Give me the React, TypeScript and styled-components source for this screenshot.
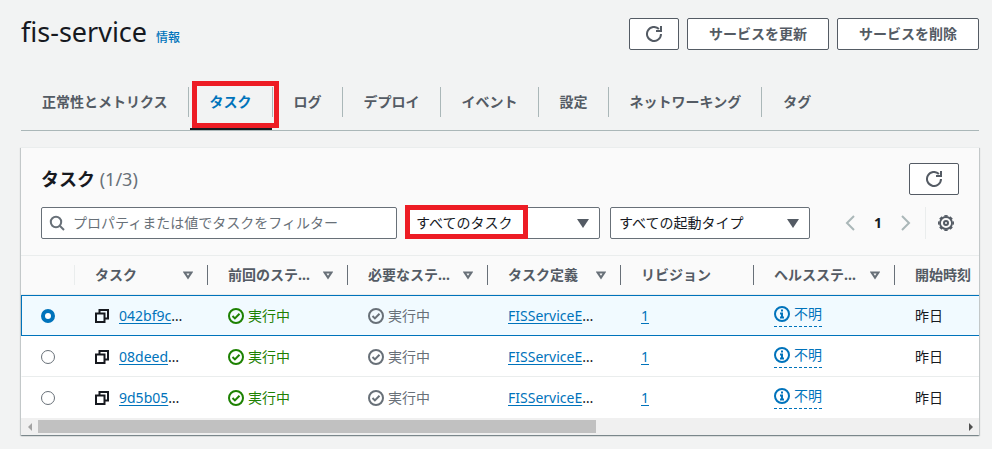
import React, { useState } from "react";
import styled, { createGlobalStyle, css } from "styled-components";

const GlobalStyle = createGlobalStyle`
  *, *::before, *::after { box-sizing: border-box; }
  body {
    margin: 0;
    background: #f2f3f3;
    color: #16191f;
    font: 14px/22px "Noto Sans", "Noto Sans CJK JP", sans-serif;
  }
  button, input, select { font: inherit; margin: 0; }
`;

const Page = styled.main`
  padding: 14px 13px 14px 21px;
`;

const PageHeader = styled.header`
  display: flex;
  justify-content: space-between;
  align-items: flex-start;
`;

const Heading = styled.div`
  display: flex;
  align-items: baseline;
  gap: 9px;
`;

const ServiceName = styled.h1`
  margin: 0;
  font-size: 27px;
  line-height: 36px;
  font-weight: 400;
`;

const InfoLink = styled.a`
  color: #0073bb;
  font-size: 12px;
  font-weight: 500;
  text-decoration: none;
`;

const Actions = styled.div`
  display: flex;
  gap: 8px;
  padding-top: 4px;
`;

const Button = styled.button<{ $icon?: boolean }>`
  display: flex;
  align-items: center;
  justify-content: center;
  height: 32px;
  padding: 0 ${(p) => (p.$icon ? 16 : 21)}px;
  border: 1px solid #545b64;
  border-radius: 2px;
  background: #fff;
  color: #545b64;
  font-weight: 700;
  white-space: nowrap;
  cursor: pointer;
`;

const Tabs = styled.nav`
  display: flex;
  margin-top: 37px;
  padding-bottom: 13px;
  border-bottom: 1px solid #aab7b8;
`;

const Tab = styled.button<{ $active?: boolean }>`
  position: relative;
  height: 30px;
  padding: 0 20px 0 21px;
  border: 0;
  border-right: 1px solid #aab7b8;
  background: none;
  color: ${(p) => (p.$active ? "#0073bb" : "#545b64")};
  font-weight: 700;
  white-space: nowrap;
  cursor: pointer;
  &:last-child { border-right: 0; }
  ${(p) =>
    p.$active &&
    css`
      &::after {
        content: "";
        position: absolute;
        left: 1px;
        right: 0;
        bottom: -13px;
        height: 2px;
        background: #16191f;
      }
    `}
`;

const TabMarker = styled.span`
  position: absolute;
  z-index: 1;
  inset: -6px -7px -11px 3px;
  border: 5px solid #ed1c24;
  pointer-events: none;
`;

const Panel = styled.section`
  margin-top: 16px;
  border-top: 1px solid #eaeded;
  background: #fff;
  box-shadow: 0 1px 1px 0 rgba(0, 28, 36, 0.3), 1px 1px 1px 0 rgba(0, 28, 36, 0.15),
    -1px 1px 1px 0 rgba(0, 28, 36, 0.15);
`;

const PanelHeader = styled.div`
  padding: 15px 20px 16px;
  border-bottom: 1px solid #eaeded;
  background: #fafafa;
`;

const TitleRow = styled.div`
  display: flex;
  justify-content: space-between;
  align-items: center;
`;

const PanelTitle = styled.h2`
  margin: 0;
  font-size: 18px;
  line-height: 28px;
  font-weight: 700;
`;

const Counter = styled.span`
  color: #687078;
  font-weight: 400;
`;

const Filters = styled.div`
  display: flex;
  align-items: center;
  margin-top: 12px;
`;

const SearchBox = styled.label`
  display: flex;
  align-items: center;
  flex: 1;
  min-width: 0;
  height: 32px;
  gap: 8px;
  padding: 0 7px;
  border: 1px solid #687078;
  border-radius: 2px;
  background: #fff;
  color: #687078;
`;

const SearchInput = styled.input`
  flex: 1;
  min-width: 0;
  padding: 0;
  border: 0;
  outline: 0;
  background: none;
  &::placeholder { color: #687078; opacity: 1; }
`;

const SelectBox = styled.div<{ $width: number; $gap: number }>`
  position: relative;
  flex: 0 0 ${(p) => p.$width}px;
  margin-left: ${(p) => p.$gap}px;
`;

const Select = styled.select<{ $inset: number }>`
  display: block;
  appearance: none;
  width: 100%;
  height: 32px;
  padding: 0 32px 0 ${(p) => p.$inset}px;
  border: 1px solid #687078;
  border-radius: 2px;
  background: #fff;
  color: #16191f;
`;

const SelectArrow = styled.svg`
  position: absolute;
  right: 11px;
  top: 12px;
  pointer-events: none;
`;

const SelectMarker = styled.span`
  position: absolute;
  inset: -2px 72px 0 0;
  border: 5px solid #ed1c24;
  pointer-events: none;
`;

const Pager = styled.div`
  display: flex;
  align-items: center;
  margin-left: 29px;
`;

const PageButton = styled.button<{ $current?: boolean }>`
  display: flex;
  align-items: center;
  justify-content: center;
  width: ${(p) => (p.$current ? 34 : 22)}px;
  height: 32px;
  padding: 0;
  border: 0;
  background: none;
  color: ${(p) => (p.$current ? "#16191f" : "#aab7b8")};
  font-weight: 700;
`;

const Preferences = styled.button`
  display: flex;
  align-items: center;
  height: 32px;
  margin-left: 8px;
  padding: 0 5px 0 12px;
  border: 0;
  border-left: 1px solid #eaeded;
  background: none;
  color: #545b64;
`;

const TableClip = styled.div`
  overflow: hidden;
`;

const Table = styled.table`
  width: 100%;
  table-layout: fixed;
  border-collapse: separate;
  border-spacing: 0;
`;

const Col = styled.col<{ $width?: number }>`
  width: ${(p) => (p.$width ? `${p.$width}px` : "auto")};
`;

const HeaderCell = styled.th`
  padding: 9px 0;
  border-bottom: 1px solid #eaeded;
  background: #fafafa;
  color: #545b64;
  font-weight: 700;
  line-height: 20px;
  text-align: left;
  white-space: nowrap;
`;

const HeaderContent = styled.div<{ $divider?: "light" | "dark" }>`
  display: flex;
  align-items: center;
  justify-content: space-between;
  height: 20px;
  padding: 0 14px 0 20px;
  border-right: ${(p) =>
    p.$divider ? `1px solid ${p.$divider === "light" ? "#eaeded" : "#687078"}` : "0"};
`;

const Row = styled.tr<{ $selected?: boolean }>`
  > td {
    border-top: 1px solid ${(p) => (p.$selected ? "#0073bb" : "transparent")};
    border-bottom: 1px solid ${(p) => (p.$selected ? "#0073bb" : "#eaeded")};
    background: ${(p) => (p.$selected ? "#f1faff" : "#fff")};
  }
  > td:first-child {
    border-left: 1px solid ${(p) => (p.$selected ? "#0073bb" : "transparent")};
  }
  &:last-child > td { border-bottom-color: transparent; }
`;

const Cell = styled.td`
  height: 41px;
  padding: 0 0 0 20px;
  white-space: nowrap;
`;

const ChoiceCell = styled(Cell)`
  padding: 0 0 0 19px;
`;

const Radio = styled.input`
  display: block;
  appearance: none;
  width: 14px;
  height: 14px;
  border: 1px solid #687078;
  border-radius: 50%;
  background: #fff;
  &:checked { border: 4px solid #0073bb; }
`;

const Inline = styled.div<{ $tone?: "success" | "muted"; $gap?: number }>`
  display: flex;
  align-items: center;
  gap: ${(p) => p.$gap ?? 4}px;
  color: ${(p) =>
    p.$tone === "success" ? "#1d8102" : p.$tone === "muted" ? "#687078" : "#16191f"};
`;

const CopyButton = styled.button`
  display: flex;
  padding: 0;
  border: 0;
  background: none;
  color: #16191f;
`;

const Link = styled.a`
  color: #0073bb;
  text-decoration: underline;
  text-underline-offset: 2px;
`;

const Health = styled.button`
  display: inline-flex;
  align-items: center;
  gap: 4px;
  height: 23px;
  padding: 0 0 2px;
  border: 0;
  border-bottom: 1px dashed #0073bb;
  background: none;
  color: #0073bb;
  vertical-align: middle;
`;

const ScrollTrack = styled.div`
  display: flex;
  align-items: center;
  height: 17px;
  background: #f0f0f0;
`;

const ScrollStep = styled.button`
  display: flex;
  align-items: center;
  justify-content: center;
  width: 17px;
  height: 17px;
  padding: 0;
  border: 0;
  background: none;
`;

const ScrollLane = styled.div`
  flex: 1;
`;

const ScrollThumb = styled.div`
  width: 60.4%;
  height: 13px;
  background: #c1c1c1;
`;

const RefreshIcon = () => (
  <svg width="16" height="16" viewBox="0 0 16 16" fill="none" stroke="currentColor" strokeWidth="2">
    <path d="M15 8a7 7 0 1 1-2.1-5" />
    <path d="M10 5h5V0" />
  </svg>
);

const SearchIcon = () => (
  <svg width="16" height="16" viewBox="0 0 16 16" fill="none" stroke="currentColor" strokeWidth="2">
    <circle cx="7" cy="7" r="5.2" />
    <path d="m11 11 4 4" />
  </svg>
);

const SortIcon = () => (
  <svg width="10" height="9" viewBox="0 0 10 9" fill="none" stroke="#687078" strokeWidth="2">
    <path d="M1.6 1.5h6.8L5 6.6z" />
  </svg>
);

const Chevron = ({ d }: { d: string }) => (
  <svg width="10" height="16" viewBox="0 0 10 16" fill="none" stroke="currentColor" strokeWidth="2">
    <path d={d} />
  </svg>
);

const GearIcon = () => (
  <svg width="16" height="16" viewBox="0 0 16 16" fill="none" stroke="currentColor">
    <circle cx="8" cy="8" r="6" strokeWidth="1.8" />
    <circle cx="8" cy="8" r="7.2" strokeWidth="1.6" pathLength="16" strokeDasharray="1.2 0.8" strokeDashoffset="0.6" />
    <circle cx="8" cy="8" r="2" strokeWidth="2" />
  </svg>
);

const CopyIcon = () => (
  <svg width="14" height="14" viewBox="0 0 14 14" fill="none" stroke="currentColor" strokeWidth="2">
    <path d="M4.5 4.500V1H13v8.500H9.500" />
    <path d="M1 4.500h8.500V13H1z" />
  </svg>
);

const CheckIcon = () => (
  <svg width="16" height="16" viewBox="0 0 16 16" fill="none" stroke="currentColor" strokeWidth="2">
    <circle cx="8" cy="8" r="7" />
    <path d="m4.5 8 2.4 2.4 4.6-4.6" />
  </svg>
);

const InfoIcon = () => (
  <svg width="16" height="16" viewBox="0 0 16 16" fill="none" stroke="currentColor" strokeWidth="2">
    <circle cx="8" cy="8" r="7" />
    <path d="M8 3.5v2M6 7.5h2V11M6 11.5h4" />
  </svg>
);

const tabs = ["正常性とメトリクス", "タスク", "ログ", "デプロイ", "イベント", "設定", "ネットワーキング", "タグ"];
const tasks = ["042bf9c", "08deed", "9d5b05"];
const columns = [
  { label: "タスク", width: 133, sort: true },
  { label: "前回のステ…", width: 140, sort: true },
  { label: "必要なステ…", width: 140, sort: true },
  { label: "タスク定義", width: 133, sort: true },
  { label: "リビジョン", width: 133, sort: false },
  { label: "ヘルスステ…", width: 141, sort: true },
];

export default function App() {
  const [selected, setSelected] = useState(0);
  return (
    <Page>
      <GlobalStyle />
      <PageHeader>
        <Heading>
          <ServiceName>fis-service</ServiceName>
          <InfoLink href="#info">情報</InfoLink>
        </Heading>
        <Actions>
          <Button $icon aria-label="更新"><RefreshIcon /></Button>
          <Button>サービスを更新</Button>
          <Button>サービスを削除</Button>
        </Actions>
      </PageHeader>

      <Tabs>
        {tabs.map((name, i) => (
          <Tab key={name} $active={i === 1} aria-current={i === 1 ? "page" : undefined}>
            {name}
            {i === 1 && <TabMarker />}
          </Tab>
        ))}
      </Tabs>

      <Panel>
        <PanelHeader>
          <TitleRow>
            <PanelTitle>タスク <Counter>(1/3)</Counter></PanelTitle>
            <Button $icon aria-label="タスクを更新"><RefreshIcon /></Button>
          </TitleRow>
          <Filters>
            <SearchBox>
              <SearchIcon />
              <SearchInput type="text" aria-label="タスクをフィルター" placeholder="プロパティまたは値でタスクをフィルター" />
            </SearchBox>
            <SelectBox $width={195} $gap={8}>
              <Select $inset={10} aria-label="タスクの状態"><option>すべてのタスク</option></Select>
              <SelectArrow width="12" height="9" viewBox="0 0 12 9"><path d="M0 0h12L6 9z" fill="#545b64" /></SelectArrow>
              <SelectMarker />
            </SelectBox>
            <SelectBox $width={200} $gap={10}>
              <Select $inset={8} aria-label="起動タイプ"><option>すべての起動タイプ</option></Select>
              <SelectArrow width="12" height="9" viewBox="0 0 12 9"><path d="M0 0h12L6 9z" fill="#545b64" /></SelectArrow>
            </SelectBox>
            <Pager>
              <PageButton aria-label="前のページ"><Chevron d="M9 1 2 8l7 7" /></PageButton>
              <PageButton $current>1</PageButton>
              <PageButton aria-label="次のページ"><Chevron d="m1 1 7 7-7 7" /></PageButton>
            </Pager>
            <Preferences aria-label="設定"><GearIcon /></Preferences>
          </Filters>
        </PanelHeader>

        <TableClip>
          <Table>
            <colgroup>
              <Col $width={54} />
              {columns.map((c) => <Col key={c.label} $width={c.width} />)}
              <Col />
            </colgroup>
            <thead>
              <tr>
                <HeaderCell aria-label="選択"><HeaderContent $divider="light" /></HeaderCell>
                {columns.map((c) => (
                  <HeaderCell key={c.label} scope="col">
                    <HeaderContent $divider="dark">{c.label}{c.sort && <SortIcon />}</HeaderContent>
                  </HeaderCell>
                ))}
                <HeaderCell scope="col"><HeaderContent>開始時刻</HeaderContent></HeaderCell>
              </tr>
            </thead>
            <tbody>
              {tasks.map((id, i) => (
                <Row key={id} $selected={selected === i}>
                  <ChoiceCell>
                    <Radio type="radio" name="task" aria-label={id} checked={selected === i} onChange={() => setSelected(i)} />
                  </ChoiceCell>
                  <Cell>
                    <Inline $gap={10}>
                      <CopyButton aria-label="コピー"><CopyIcon /></CopyButton>
                      <span><Link href="#task">{id}</Link>…</span>
                    </Inline>
                  </Cell>
                  <Cell><Inline $tone="success"><CheckIcon />実行中</Inline></Cell>
                  <Cell><Inline $tone="muted"><CheckIcon />実行中</Inline></Cell>
                  <Cell><Link href="#definition">FISServiceE</Link>…</Cell>
                  <Cell><Link href="#revision">1</Link></Cell>
                  <Cell><Health><InfoIcon />不明</Health></Cell>
                  <Cell>昨日</Cell>
                </Row>
              ))}
            </tbody>
          </Table>
        </TableClip>
        <ScrollTrack>
          <ScrollStep aria-label="左へスクロール">
            <svg width="4" height="8" viewBox="0 0 4 8"><path d="M4 0v8L0 4z" fill="#a3a3a3" /></svg>
          </ScrollStep>
          <ScrollLane><ScrollThumb /></ScrollLane>
          <ScrollStep aria-label="右へスクロール">
            <svg width="4" height="8" viewBox="0 0 4 8"><path d="M0 0v8l4-4z" fill="#505050" /></svg>
          </ScrollStep>
        </ScrollTrack>
      </Panel>
    </Page>
  );
}
